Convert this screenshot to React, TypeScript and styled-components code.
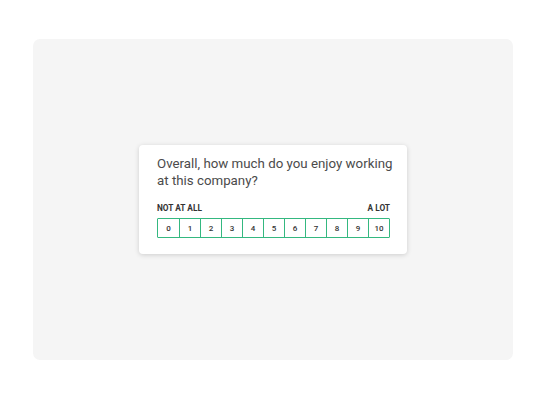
import React from 'react';
import styled, { createGlobalStyle } from 'styled-components';

const GlobalStyle = createGlobalStyle`
  html, body {
    margin: 0;
    padding: 0;
    background: #ffffff;
  }
  body {
    font-family: Roboto, "Liberation Sans", Arial, sans-serif;
  }
`;

const Page = styled.div`
  width: 546px;
  height: 400px;
  padding: 39px 33px 0;
  box-sizing: border-box;
`;

const Panel = styled.div`
  width: 480px;
  height: 321px;
  background: #f5f5f5;
  border-radius: 7px;
  display: flex;
  align-items: center;
  justify-content: center;
`;

const Card = styled.div`
  width: 268px;
  box-sizing: border-box;
  padding: 10px 17px 16px 18px;
  background: #ffffff;
  border-radius: 4px;
  box-shadow: 0 1px 5px rgba(0, 0, 0, 0.16);
`;

const Question = styled.p`
  margin: 0 -8px 0 0;
  font-size: 13.3px;
  line-height: 17px;
  font-weight: 400;
  color: #4b4b4b;
`;

const Labels = styled.div`
  display: flex;
  justify-content: space-between;
  margin-top: 14px;
  font-size: 8.3px;
  line-height: 10px;
  font-weight: 700;
  color: #333333;
  text-transform: uppercase;
`;

const Scale = styled.div`
  display: grid;
  grid-template-columns: repeat(11, 1fr);
  margin-top: 5px;
  border: 1px solid #34b880;
  border-radius: 1px;
`;

const Cell = styled.div<{ $first?: boolean }>`
  height: 18px;
  display: flex;
  align-items: center;
  justify-content: center;
  border-left: ${({ $first }) => ($first ? 'none' : '1px solid #34b880')};
  font-size: 8px;
  font-weight: 500;
  color: #333333;
`;

const App: React.FC = () => {
  const points = Array.from({ length: 11 }, (_, i) => i);
  return (
    <>
      <GlobalStyle />
      <Page>
        <Panel>
          <Card>
            <Question>
              Overall, how much do you enjoy working at this company?
            </Question>
            <Labels>
              <span>Not at all</span>
              <span>A lot</span>
            </Labels>
            <Scale>
              {points.map((p) => (
                <Cell key={p} $first={p === 0}>
                  {p}
                </Cell>
              ))}
            </Scale>
          </Card>
        </Panel>
      </Page>
    </>
  );
};

export default App;
